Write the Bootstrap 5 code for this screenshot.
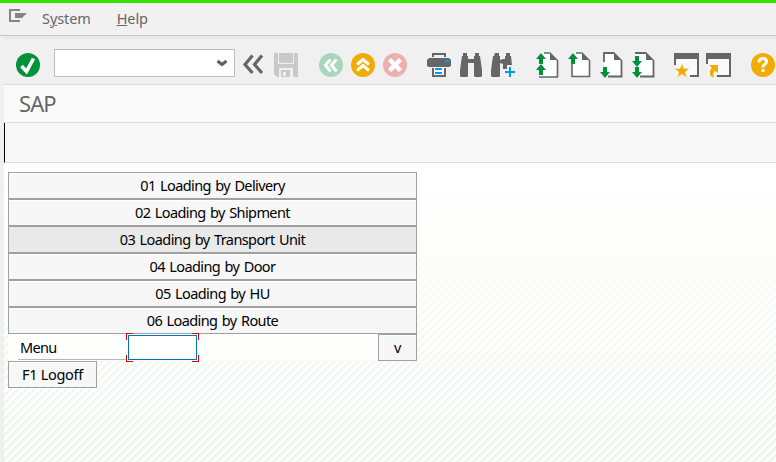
<!DOCTYPE html>
<html lang="en">
<head>
<meta charset="utf-8">
<meta name="viewport" content="width=device-width, initial-scale=1">
<title>SAP</title>
<link href="https://cdn.jsdelivr.net/npm/bootstrap@5.3.0/dist/css/bootstrap.min.css" rel="stylesheet">
<style>
body{font-family:"Noto Sans","DejaVu Sans Condensed",sans-serif;font-size:14.5px;letter-spacing:-.22px;line-height:20px;background:#f0f0f0;color:#000}
.sap-menu{height:36px;border-top:3px solid #37e000;border-bottom:1px solid #c6c6c6;background:#f1f1f1}
.sap-menu a{color:#666;margin-top:5px;letter-spacing:-.1px}
.sap-menu .help-link{margin-left:26px}
.sap-menu svg{width:20px;height:16px;margin:4px 14px 0 8px}
.sap-tools{height:49px;border-top:3px solid #e8e8e8;border-bottom:1px solid #ddd;padding-left:8px}
.sap-tools>svg{width:32px;height:45px;flex:none}
.cmd{width:181px;height:28px;margin:3px 3px 0 10px;border:1px solid #bdbdbd;background:#fff}
.cmd input{font:inherit;outline:0}
.cmd svg{width:24px;height:26px;flex:none}
.gap-a{margin-left:13px}.gap-b{margin-left:12px}
.sap-title{height:38px;background:#fafafa;border-bottom:1px solid #ddd;color:#666;font-size:22px;line-height:37px;padding-left:15px;letter-spacing:-.9px}
.sap-app{height:40px;background:#f8f8f8;border-bottom:1px solid #ddd;border-left:1px solid #000}
.sap-work{height:299px;padding:9px 0 0 4px;background:linear-gradient(180deg,#fff 0%,rgba(255,255,255,.85) 20%,rgba(255,255,255,0) 100%),linear-gradient(135deg,#ebf8eb 12.5%,#fff 12.5% 37.5%,#ebf8eb 37.5% 62.5%,#fff 62.5% 87.5%,#ebf8eb 87.5%) 0 0/8px 8px}
.screen{width:409px}
.key{height:27px;border:1px solid #a0a0a0;border-radius:0;background:#f7f7f7;color:#000;font:inherit;line-height:25px;letter-spacing:-.6px;word-spacing:1.2px;padding:0;box-shadow:inset 0 1px #fff}
.key:hover,.key.lit{background:#e9e9e9;border-color:#a0a0a0;color:#000}
.key.lit{box-shadow:none}
.entry{height:27px;background:rgba(255,255,255,.75)}
.caption-cell{width:109px;height:26px;margin-left:10px;padding:3px 0 0 2px;border-bottom:1px solid #b5b5b5;letter-spacing:-.7px}
.focus-cell{width:73px;height:29px;margin:-1px 0 -1px -1px;padding:2px;--r:linear-gradient(#e00000,#e00000);background:
 var(--r) 0 0/7px 1px,var(--r) 0 0/1px 7px,var(--r) 100% 0/7px 1px,var(--r) 100% 0/1px 7px,
 var(--r) 0 100%/7px 1px,var(--r) 0 100%/1px 7px,var(--r) 100% 100%/7px 1px,var(--r) 100% 100%/1px 7px;background-repeat:no-repeat}
.focus-cell input{width:69px;height:25px;border:1px solid #0077b8;background:#fff;outline:0;font:inherit}
.key-v{width:39px}.key-off{width:89px;letter-spacing:-.3px;word-spacing:0}
</style>
<script src="https://cdn.jsdelivr.net/npm/bootstrap@5.3.0/dist/js/bootstrap.bundle.min.js"></script>
</head>
<body class="overflow-hidden">
<svg class="d-none">
  <symbol id="up" viewBox="0 0 10 11"><path fill="#00913d" d="M5 0 10 6H7v5H3V6H0z"/></symbol>
  <symbol id="down" viewBox="0 0 10 11"><path fill="#00913d" d="M5 11 10 5H7V0H3v5H0z"/></symbol>
</svg>
<nav class="sap-menu d-flex align-items-start">
  <svg viewBox="8 7 20 16"><path d="M20 10H10v11h10" fill="none" stroke="#858585" stroke-width="2"/><path d="M15 13h12l-5 5h-7z" fill="#858585"/></svg>
  <a href="#" class="text-decoration-none">S<u>y</u>stem</a>
  <a href="#" class="text-decoration-none help-link"><u>H</u>elp</a>
</nav>
<main class="ms-1">
  <div class="sap-tools d-flex align-items-center">
    <svg viewBox="12 39 32 45"><circle cx="28" cy="65" r="12" fill="#00913d"/><path d="M21.500 66l5 5.500 7-13" fill="none" stroke="#fff" stroke-width="3.600"/></svg>
    <div class="cmd d-flex align-items-center flex-shrink-0">
      <input type="text" class="border-0 bg-transparent flex-grow-1 w-50" aria-label="Command">
      <svg viewBox="210 50 24 26"><path d="M217.500 61l4.500 3.500 4.500-3.500" fill="none" stroke="#606060" stroke-width="3"/></svg>
    </div>
    <svg viewBox="238 39 32 45"><path d="M252.500 55.500 245 64.500l7.500 8.500M262 55.500 254.500 64.500l7.500 8.500" fill="none" stroke="#666" stroke-width="3.200"/></svg>
    <svg viewBox="270 39 32 45"><path fill="#c9c9c9" fill-rule="evenodd" d="M274 53h24v24h-21l-3-3zM278 53v11h16V53zM279 68v9h14v-9z"/><path fill="#c9c9c9" d="M279 53h14v10h-14zM281 70h9v7h-9z"/><path fill="#f0f0f0" d="M283 72h3v4h-3z"/></svg>
    <svg class="gap-a" viewBox="315 39 32 45"><circle cx="331" cy="65" r="12" fill="#a9d7bb"/><path d="M330.500 59.500l-5 5.500 5 6.500M336.500 59.500l-5 5.500 5 6.500" fill="none" stroke="#fff" stroke-width="3"/></svg>
    <svg viewBox="347 39 32 45"><circle cx="363" cy="65" r="12" fill="#f2ab00"/><path d="M357 64.500l6-5 6 5M357 70.500l6-5 6 5" fill="none" stroke="#fff" stroke-width="3"/></svg>
    <svg viewBox="379 39 32 45"><circle cx="395" cy="65" r="12" fill="#ecb0b0"/><path d="M389.500 59.500l11 11M400.500 59.500l-11 11" fill="none" stroke="#fff" stroke-width="4.500"/></svg>
    <svg class="gap-b" viewBox="423 39 32 45"><path fill="#666" d="M432 57v-4h14v4h-2v-2h-10v2zM429 58h20l2 2v6l-2 1h-20l-2-1v-6zM432 68h14v9h-14z"/><path fill="#f8f8f8" d="M434 67h10v8h-10z"/><path fill="#009de0" d="M445 60h4v2h-4zM435 68h7v2h-7zM435 72h7v2h-7z"/></svg>
    <svg viewBox="455 39 32 45"><path fill="#666" d="M463 53h4v3h1v3h6v-3h1v-3h4v3h1l2 14v6l-1 1h-6l-1-1V63h-6v13l-1 1h-6l-1-1v-6l2-14h1z"/></svg>
    <svg viewBox="487 39 32 45"><path fill="#666" d="M495 53h4v3h1v4l3-1h2v-3h1v-3h4v3h1l1 9h-5v4h-4v-5l-3-1v13l-1 1h-7l-1-1v-6l2-14h1z"/><path d="M510 67v10M505 72h10" stroke="#009de0" stroke-width="2"/></svg>
    <svg class="gap-b" viewBox="531 39 32 45"><path fill="#fff" d="M539 53h13l6 6v18h-19z"/><path d="M544 53h6M557.500 60v17M539 77h19" fill="none" stroke="#666" stroke-width="1.600"/><path fill="#666" d="M550 52l8 8h-8z"/><use href="#up" x="536" y="53" width="10" height="11"/><use href="#up" x="536" y="64" width="10" height="11"/></svg>
    <svg viewBox="563 39 32 45"><path fill="#fff" d="M572 53h10l8 7v17h-18z"/><path d="M576 53h6M589.500 60v16.500H572V64" fill="none" stroke="#666" stroke-width="1.600"/><path fill="#666" d="M582 52l8 8h-8z"/><use href="#up" x="568" y="53" width="10" height="11"/></svg>
    <svg viewBox="595 39 32 45"><path fill="#fff" d="M604 53h10l8 7v17h-18z"/><path d="M604 62V53h10M621.500 60v16.500H608" fill="none" stroke="#666" stroke-width="1.800"/><path fill="#666" d="M614 52l8 8h-8z"/><use href="#down" x="600" y="67" width="10" height="11"/></svg>
    <svg viewBox="627 39 32 45"><path fill="#fff" d="M635 53h11l8 7v17h-19z"/><path d="M635 53h11M653.500 60v16.500H640" fill="none" stroke="#666" stroke-width="1.800"/><path fill="#666" d="M646 52l8 8h-8z"/><use href="#down" x="632" y="56" width="10" height="11"/><use href="#down" x="632" y="67" width="10" height="11"/></svg>
    <svg class="gap-b" viewBox="671 39 32 45"><path fill="#fafafa" d="M676 59h21v16h-21z"/><path fill="#666" d="M674 53h25v24h-9v-2h7V59h-21v6h-2z"/><path fill="#f2ab00" stroke="#f0f0f0" stroke-width=".5" d="M682 63.500l2 5h5.500l-4.300 3.500 1.600 5.500-4.800-3.200-4.800 3.200 1.600-5.500-4.300-3.500h5.500z"/></svg>
    <svg viewBox="703 39 32 45"><path fill="#fafafa" d="M708 59h21v16h-21z"/><path fill="#666" d="M706 53h25v24h-14v-2h12V59h-21v5h-2z"/><path fill="#f2ab00" d="M709 65h9v8l-3-2q-3 2-1 6h-2q-5-5 0-9z"/></svg>
    <svg class="gap-b" viewBox="747 39 32 45"><circle cx="763" cy="65" r="12" fill="#f2ab00"/><path d="M759 62.500q0-4 4-4 3.500 0 3.500 3 0 2-2 3-1.500.800-1.500 3M763 69v3" fill="none" stroke="#fff" stroke-width="3"/></svg>
  </div>
  <h1 class="sap-title fw-normal mb-0">SAP</h1>
  <div class="sap-app"></div>
  <section class="sap-work">
    <div class="screen d-flex flex-column">
      <button class="btn key">01 Loading by Delivery</button>
      <button class="btn key">02 Loading by Shipment</button>
      <button class="btn key lit">03 Loading by Transport Unit</button>
      <button class="btn key">04 Loading by Door</button>
      <button class="btn key">05 Loading by HU</button>
      <button class="btn key">06 Loading by Route</button>
      <div class="entry d-flex">
        <label class="caption-cell" for="menu-no">Menu</label>
        <div class="focus-cell d-flex"><input id="menu-no" type="text"></div>
        <button class="btn key key-v ms-auto">v</button>
      </div>
      <button class="btn key key-off">F1 Logoff</button>
    </div>
  </section>
</main>
</body>
</html>
